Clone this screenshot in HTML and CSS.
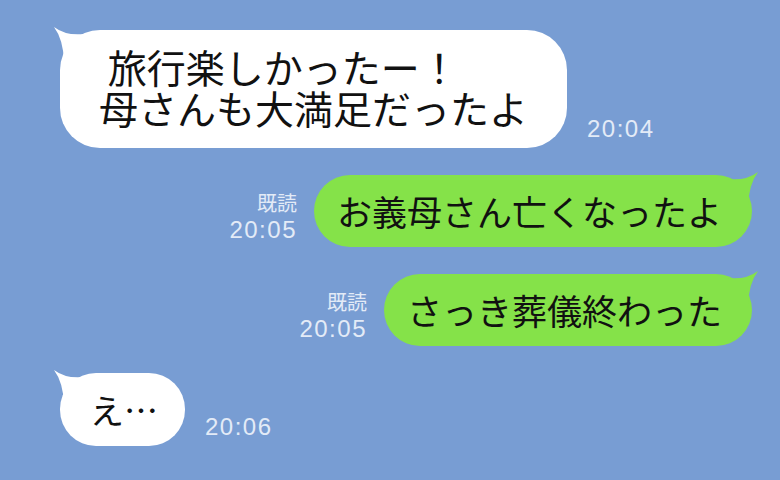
FILE: index.html
```html
<!DOCTYPE html>
<html lang="ja">
<head>
    <meta charset="UTF-8">
    <meta name="viewport" content="width=device-width, initial-scale=1.0">
    <title>トーク</title>
    <link rel="stylesheet" href="styles.css">
</head>
<body>
    <main class="chat">
        <!-- received -->
        <div class="row left">
            <div class="bubble white big">
                <svg class="tail" viewBox="0 0 34 36"><path d="M2 2 Q14 11 32 9 L32 36 L12 36 Q11 14 2 2 Z"/></svg>
                <p class="line first">&nbsp;旅行楽しかったー！</p>
                <p class="line">母さんも大満足だったよ</p>
            </div>
            <span class="time">20:04</span>
        </div>

        <!-- sent -->
        <div class="row right">
            <div class="meta">
                <span class="read">既読</span>
                <span class="time">20:05</span>
            </div>
            <div class="bubble green">
                <svg class="tail" viewBox="0 0 34 36"><path d="M2 2 Q14 11 32 9 L32 36 L12 36 Q11 14 2 2 Z"/></svg>
                <p class="line">お義母さん亡くなったよ</p>
            </div>
        </div>

        <div class="row right">
            <div class="meta">
                <span class="read">既読</span>
                <span class="time">20:05</span>
            </div>
            <div class="bubble green">
                <svg class="tail" viewBox="0 0 34 36"><path d="M2 2 Q14 11 32 9 L32 36 L12 36 Q11 14 2 2 Z"/></svg>
                <p class="line">さっき葬儀終わった</p>
            </div>
        </div>

        <div class="row left">
            <div class="bubble white small">
                <svg class="tail" viewBox="0 0 34 36"><path d="M2 2 Q14 11 32 9 L32 36 L12 36 Q11 14 2 2 Z"/></svg>
                <p class="line">え…</p>
            </div>
            <span class="time">20:06</span>
        </div>
    </main>
</body>
</html>
```

FILE: styles.css
```css
body {
    margin: 0;
    padding: 0;
    background-color: #789dd3;
    font-family: "Noto Sans CJK JP", sans-serif;
    width: 780px;
    height: 480px;
    overflow: hidden;
}

.chat {
    display: flex;
    flex-direction: column;
    gap: 27px;
    padding: 30px 28px 0 60px;
}

.row {
    display: flex;
    align-items: flex-end;
}

.row.right {
    justify-content: flex-end;
}

.bubble {
    position: relative;
    border-radius: 36px;
    color: #111;
}

.bubble .line {
    margin: 0;
    white-space: nowrap;
}

.tail {
    position: absolute;
    top: -5px;
    width: 34px;
    height: 36px;
}

/* received */
.bubble.white {
    background-color: #fff;
}

.bubble.white .tail {
    left: -8px;
    fill: #fff;
}

.bubble.big {
    width: 507px;
    box-sizing: border-box;
    padding: 16px 0 20px 39px;
    border-radius: 40px;
    font-size: 39px;
    line-height: 41px;
}

.bubble.small {
    height: 73px;
    box-sizing: border-box;
    padding: 0 27px 0 30px;
    font-size: 34px;
    line-height: 73px;
}

/* sent */
.bubble.green {
    background-color: #85e249;
    height: 72px;
    box-sizing: border-box;
    padding: 0 30px 0 23px;
    font-size: 35px;
    line-height: 72px;
}

.bubble.green .tail {
    right: -8px;
    fill: #85e249;
    transform: scaleX(-1);
}

.time {
    font-family: "Liberation Sans", Arial, sans-serif;
    font-size: 24px;
    letter-spacing: 1.5px;
    line-height: 27px;
    color: #e3ebf7;
}

.left .time {
    margin: 0 0 6px 20px;
}

.meta {
    display: flex;
    flex-direction: column;
    align-items: flex-end;
    margin: 0 17px 4px 0;
}

.read {
    font-size: 20px;
    line-height: 27px;
    color: #e3ebf7;
}
```
